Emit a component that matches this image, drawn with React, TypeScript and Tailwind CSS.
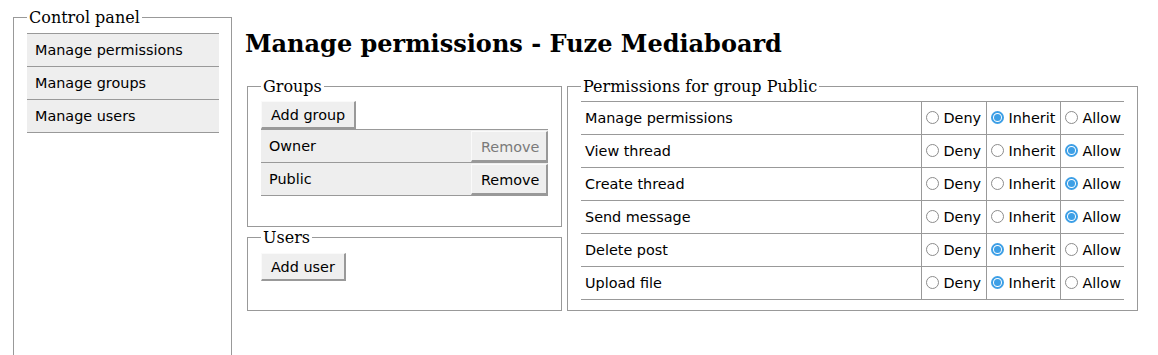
import React from 'react';

type Choice = 'deny' | 'inherit' | 'allow';

const perms: { name: string; value: Choice }[] = [
  { name: 'Manage permissions', value: 'inherit' },
  { name: 'View thread', value: 'allow' },
  { name: 'Create thread', value: 'allow' },
  { name: 'Send message', value: 'allow' },
  { name: 'Delete post', value: 'inherit' },
  { name: 'Upload file', value: 'inherit' },
];

const serif = { fontFamily: '"DejaVu Serif", serif' };

const Radio = ({ checked }: { checked: boolean }) =>
  checked ? (
    <span className="flex h-[13px] w-[13px] shrink-0 items-center justify-center rounded-full border-2 border-[#3d9fe6] bg-white">
      <span className="h-[7px] w-[7px] rounded-full bg-[#3d9fe6]" />
    </span>
  ) : (
    <span className="h-[13px] w-[13px] shrink-0 rounded-full border border-[#8c8c8c] bg-white" />
  );

const Btn = ({ children, disabled, className = '' }: { children: React.ReactNode; disabled?: boolean; className?: string }) => (
  <button
    className={`border border-t-[#fafafa] border-l-[#fafafa] border-r-2 border-b-2 border-r-[#999] border-b-[#999] bg-[#efefef] px-[9px] pt-[2px] text-[14.4px] leading-none ${
      disabled ? 'text-[#7a7a7a]' : 'text-black'
    } ${className}`}
  >
    {children}
  </button>
);

const Legend = ({ children }: { children: React.ReactNode }) => (
  <legend className="px-[2px] text-[16px] leading-[19px] text-black" style={serif}>
    {children}
  </legend>
);

export default function App() {
  const cell = (on: boolean, label: string) => (
    <td className="border-l border-[#999] pl-[4px]">
      <div className="flex items-center gap-[5px]">
        <Radio checked={on} />
        <span className="pt-[2px]">{label}</span>
      </div>
    </td>
  );

  return (
    <div
      className="flex h-[355px] overflow-hidden bg-white pl-[13px] pt-[8px] text-[14.4px] text-black"
      style={{ fontFamily: '"DejaVu Sans", sans-serif' }}
    >
      <fieldset className="h-[370px] w-[219px] shrink-0 border border-[#999] pl-[13px] pr-[12px] pt-[6px]">
        <Legend>Control panel</Legend>
        <div className="flex flex-col border-b border-[#999]">
          {['Manage permissions', 'Manage groups', 'Manage users'].map((n) => (
            <div key={n} className="flex h-[33px] items-center border-t border-[#999] bg-[#eeeeee] pl-[8px] pt-[2px]">
              {n}
            </div>
          ))}
        </div>
      </fieldset>

      <div className="ml-[13px] flex flex-col">
        <h2 className="mt-[22px] text-[24px] font-bold leading-[28px]" style={serif}>
          Manage permissions - Fuze Mediaboard
        </h2>

        <div className="mt-[19px] flex items-start">
          <div className="ml-[2px] flex w-[315px] flex-col gap-[1px]">
            <fieldset className="border border-[#999] px-[13px] pb-[30px] pt-[5px]">
              <Legend>Groups</Legend>
              <Btn className="h-[28px]">Add group</Btn>
              <div className="flex flex-col border-b border-[#999]">
                {[
                  { n: 'Owner', d: true },
                  { n: 'Public', d: false },
                ].map((g) => (
                  <div key={g.n} className="flex h-[33px] items-start justify-between border-t border-[#999] bg-[#eeeeee]">
                    <span className="self-center pl-[8px] pt-[2px]">{g.n}</span>
                    <Btn disabled={g.d} className="mt-[1px] h-[31px] w-[77px] px-0">
                      Remove
                    </Btn>
                  </div>
                ))}
              </div>
            </fieldset>

            <fieldset className="border border-[#999] px-[13px] pb-[29px] pt-[6px]">
              <Legend>Users</Legend>
              <Btn className="h-[28px]">Add user</Btn>
            </fieldset>
          </div>

          <fieldset className="ml-[5px] w-[571px] border border-[#999] px-[13px] pb-[10px] pt-[5px]">
            <Legend>Permissions for group Public</Legend>
            <table className="w-[543px] table-fixed border-collapse">
              <colgroup>
                <col className="w-[340px]" />
                <col className="w-[65px]" />
                <col className="w-[74px]" />
                <col className="w-[64px]" />
              </colgroup>
              <tbody>
                {perms.map((p) => (
                  <tr key={p.name} className="h-[33px] border-y border-[#999]">
                    <td className="pl-[4px] pt-[2px]">{p.name}</td>
                    {cell(p.value === 'deny', 'Deny')}
                    {cell(p.value === 'inherit', 'Inherit')}
                    {cell(p.value === 'allow', 'Allow')}
                  </tr>
                ))}
              </tbody>
            </table>
          </fieldset>
        </div>
      </div>
    </div>
  );
}
